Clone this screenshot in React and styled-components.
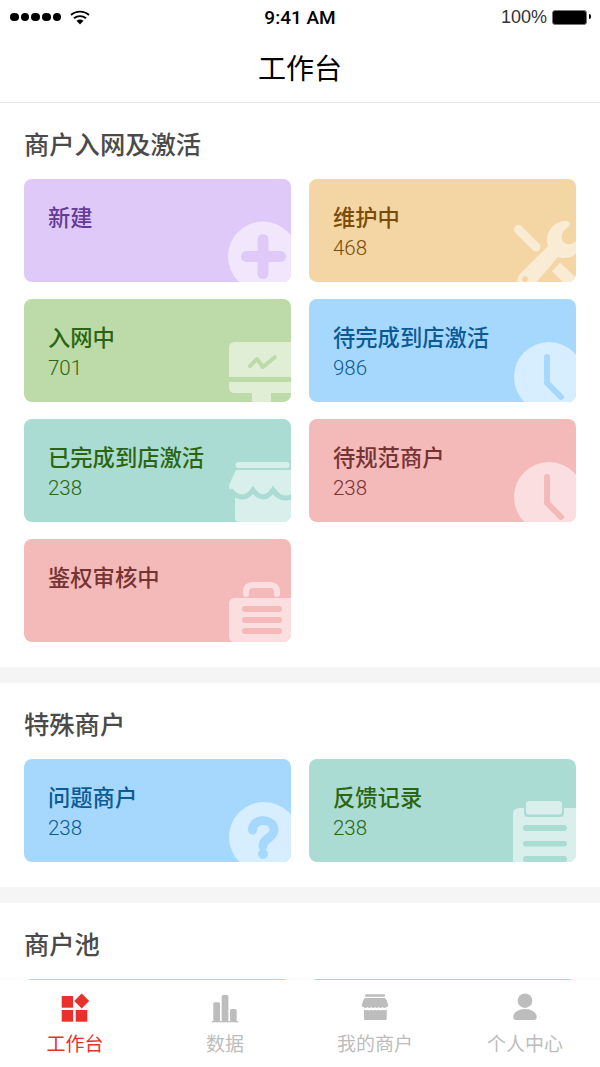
import styled, { createGlobalStyle } from "styled-components"

const GlobalStyle = createGlobalStyle`
    html, body{
        margin: 0;
        padding: 0;
        background: #ffffff;
    }
    *{
        box-sizing: border-box;
    }
`

const tones = {
    purple: { bg: "#dfc9f9", tint: "#f1e6fc", text: "#643a9a" },
    tan: { bg: "#f3d6a4", tint: "#faebd4", text: "#7a4c07" },
    green: { bg: "#bddba8", tint: "#dfeed5", text: "#2b6510" },
    blue: { bg: "#a6d8fe", tint: "#d6eeff", text: "#0b5a96" },
    teal: { bg: "#aadcd4", tint: "#d8efeb", text: "#2b6510" },
    pink: { bg: "#f4baba", tint: "#fbdfe0", text: "#763333" },
}

const PlusArt = () => (
    <>
        <circle cx="48" cy="44.5" r="35" fill="currentColor" />
        <rect className="cut" x="26" y="39" width="45" height="11" rx="5.5" />
        <rect className="cut" x="42.5" y="22" width="11" height="45" rx="5.5" />
    </>
)

const ToolsArt = () => (
    <>
        <path d="M18.5 17.5 L36 35" stroke="currentColor" strokeWidth="9" strokeLinecap="round" fill="none" />
        <path d="M56 55 L78 76" stroke="currentColor" strokeWidth="12" fill="none" />
        <path
            d="M66 9 C56 9 47 17 47 28 C47 31 47.500 32.500 48 34 L20 62 C17 65 17 68 18 72 L35 72 L58 45 C60 46 62 46 65 46 C71 46 76 43 78 39 L78 27 C75 31 71 33 67 32 C63 31 61 27 62 23 C63 19 66 16 69 14.500 C71 12 69 9 66 9 Z"
            fill="currentColor"
        />
        <circle className="hole" cx="25" cy="67" r="3" />
    </>
)

const ScreenArt = () => (
    <>
        <path d="M20 10 H76 V61 H20 Q14 61 14 55 V16 Q14 10 20 10 Z" fill="currentColor" />
        <rect className="hole" x="14" y="45" width="62" height="5" />
        <rect x="37" y="61" width="19" height="9" fill="currentColor" />
        <path className="cut line" d="M35 34 L42 27 L48 35 L60 25" strokeWidth="4" strokeLinecap="round" strokeLinejoin="round" />
    </>
)

const ClockArt = () => (
    <>
        <circle cx="49" cy="45" r="35" fill="currentColor" />
        <path className="cut line" d="M47 25 V51 L61 65" strokeWidth="6" strokeLinecap="round" strokeLinejoin="round" />
    </>
)

const StoreArt = () => (
    <>
        <rect x="20.500" y="10" width="54" height="6" rx="3" fill="currentColor" />
        <path d="M21 18 H76 V70 H24 Q20 70 20 66 V44 Q14 40 14 33 Z" fill="currentColor" />
        <path className="cut line" d="M15 38 Q28 52 38 38 Q48 52 58 38 Q66 50 78 44" strokeWidth="5" />
    </>
)

const CaseArt = () => (
    <>
        <path d="M31 22 V20 Q31 13 38 13 H55 Q62 13 62 20 V22" stroke="currentColor" strokeWidth="6" strokeLinecap="round" fill="none" />
        <path d="M20 26 H76 V70 H20 Q14 70 14 64 V32 Q14 26 20 26 Z" fill="currentColor" />
        <rect className="hole" x="27" y="34" width="40" height="6" rx="3" />
        <rect className="hole" x="27" y="45" width="40" height="6" rx="3" />
        <rect className="hole" x="27" y="56" width="40" height="6" rx="3" />
    </>
)

const QuestionArt = () => (
    <>
        <circle cx="49" cy="45" r="35" fill="currentColor" />
        <path className="cut line" d="M37.500 38 C37.500 25 59 26 59 38 C59 46 48 46 48 54" strokeWidth="9" strokeLinecap="round" />
        <circle className="hole" cx="48" cy="62" r="5" />
    </>
)

const ClipboardArt = () => (
    <>
        <path d="M19 16 H76 V70 H13 V22 Q13 16 19 16 Z" fill="currentColor" />
        <rect className="hole" x="24" y="8" width="40" height="17" rx="4" />
        <rect x="26" y="9" width="36" height="13.500" rx="3" fill="currentColor" />
        <rect className="hole" x="23" y="33" width="44" height="6" rx="3" />
        <rect className="hole" x="23" y="49" width="44" height="5.500" rx="2.700" />
        <rect className="hole" x="23" y="64" width="44" height="6" rx="3" />
    </>
)

const arts = {
    plus: PlusArt,
    tools: ToolsArt,
    screen: ScreenArt,
    clock: ClockArt,
    store: StoreArt,
    briefcase: CaseArt,
    question: QuestionArt,
    clipboard: ClipboardArt,
}

const Card = ({ tone, title, count, art }) => {
    const Art = arts[art]
    const colors = tones[tone]
    return (
        <CardBox $bg={colors.bg}>
            {title && <CardTitle $color={colors.text}>{title}</CardTitle>}
            {count && <CardCount $color={colors.text}>{count}</CardCount>}
            {Art && (
                <CardArt viewBox="0 0 76 70" $tint={colors.tint} $bg={colors.bg}>
                    <Art />
                </CardArt>
            )}
        </CardBox>
    )
}

const sections = [
    {
        title: "商户入网及激活",
        cards: [
            { tone: "purple", title: "新建", art: "plus" },
            { tone: "tan", title: "维护中", count: "468", art: "tools" },
            { tone: "green", title: "入网中", count: "701", art: "screen" },
            { tone: "blue", title: "待完成到店激活", count: "986", art: "clock" },
            { tone: "teal", title: "已完成到店激活", count: "238", art: "store" },
            { tone: "pink", title: "待规范商户", count: "238", art: "clock" },
            { tone: "pink", title: "鉴权审核中", art: "briefcase" },
        ],
    },
    {
        title: "特殊商户",
        cards: [
            { tone: "blue", title: "问题商户", count: "238", art: "question" },
            { tone: "teal", title: "反馈记录", count: "238", art: "clipboard" },
        ],
    },
    {
        title: "商户池",
        cards: [
            { tone: "blue" },
            { tone: "teal" },
        ],
    },
]

const WorkbenchIcon = () => (
    <TabSvg viewBox="0 0 32 32">
        <rect x="2.700" y="3" width="11.400" height="11.700" />
        <rect x="2.700" y="17" width="11.400" height="11.700" />
        <rect x="16.700" y="17" width="11.600" height="11.700" />
        <path d="M22.700 0.500 L30.200 8 L22.700 15.500 L15.200 8 Z" />
    </TabSvg>
)

const DataIcon = () => (
    <TabSvg viewBox="0 0 32 32">
        <rect x="4.300" y="9.300" width="6.700" height="19" rx="1.500" />
        <rect x="12.700" y="2" width="6.700" height="26.300" rx="1.500" />
        <rect x="21" y="16" width="6.700" height="12.300" rx="1.500" />
        <rect x="2.700" y="28" width="26.600" height="1.300" />
    </TabSvg>
)

const StoreIcon = () => (
    <TabSvg viewBox="0 0 32 32">
        <rect x="6" y="1.300" width="20" height="2.400" rx="1" />
        <path d="M7 5 H25 Q27 5 27.500 7 L29.300 12 Q29.300 14 27.500 14 Q25.500 16 23.500 14 Q21.500 16 19.700 14 Q17.800 16 16 14 Q14.200 16 12.300 14 Q10.500 16 8.500 14 Q6.500 16 4.500 14 Q2.700 14 2.700 12 L4.500 7 Q5 5 7 5 Z" />
        <path d="M5 16.500 Q7 18 8.500 16.800 Q10.500 18 12.300 16.800 Q14.200 18 16 16.800 Q17.800 18 19.700 16.800 Q21.500 18 23.500 16.800 Q25.500 18 27.700 16.500 V25.500 Q27.700 27 26 27 H6.500 Q5 27 5 25.500 Z" />
    </TabSvg>
)

const PersonIcon = () => (
    <TabSvg viewBox="0 0 32 32">
        <circle cx="16" cy="7.700" r="7.300" />
        <path d="M4.300 24 C4.300 19 10 16 16 16 S27.700 19 27.700 24 Q27.700 27 25 27 H7 Q4.300 27 4.300 24 Z" />
    </TabSvg>
)

const tabs = [
    { label: "工作台", Icon: WorkbenchIcon, active: true },
    { label: "数据", Icon: DataIcon },
    { label: "我的商户", Icon: StoreIcon },
    { label: "个人中心", Icon: PersonIcon },
]

const App = () => {
    return (
        <Page>
            <GlobalStyle />
            <StatusBar>
                <StatusLeft>
                    <Signal>
                        {[0, 1, 2, 3, 4].map((dot) => <i key={dot} />)}
                    </Signal>
                    <svg width="20" height="15" viewBox="0 0 20 15">
                        <path d="M1 5 C6 0.500 14 0.500 19 5" stroke="#000" strokeWidth="1.800" fill="none" />
                        <path d="M4 8.300 C7.500 5.300 12.500 5.300 16 8.300" stroke="#000" strokeWidth="1.800" fill="none" />
                        <path d="M6.500 10.700 C8.500 9.200 11.500 9.200 13.500 10.700 L10 14.500 Z" fill="#000" />
                    </svg>
                </StatusLeft>
                <Clock>9:41 AM</Clock>
                <StatusRight>
                    100%
                    <Battery />
                </StatusRight>
            </StatusBar>
            <NavBar>工作台</NavBar>
            {sections.map((section) => (
                <Section key={section.title}>
                    <SectionTitle>{section.title}</SectionTitle>
                    <CardGrid>
                        {section.cards.map((card, index) => <Card key={index} {...card} />)}
                    </CardGrid>
                </Section>
            ))}
            <TabBar>
                {tabs.map(({ label, Icon, active }) => (
                    <Tab key={label} $active={active}>
                        <Icon />
                        <span>{label}</span>
                    </Tab>
                ))}
            </TabBar>
        </Page>
    )
}

const Page = styled.div`
    position: relative;
    width: 600px;
    height: 1067px;
    overflow: hidden;
    background: #ffffff;
    font-family: "Liberation Sans", "Noto Sans CJK SC", sans-serif;
`

const StatusBar = styled.div`
    display: grid;
    grid-template-columns: 1fr auto 1fr;
    align-items: center;
    height: 34px;
    padding: 0 10px;
    color: #000000;
    font-size: 18px;
`

const StatusLeft = styled.div`
    display: flex;
    align-items: center;
    gap: 9px;
`

const Signal = styled.div`
    display: flex;
    gap: 2.200px;
    i{
        display: block;
        width: 8.500px;
        height: 8.500px;
        border-radius: 50%;
        background: #000000;
    }
`

const Clock = styled.div`
    font-family: Roboto, sans-serif;
    font-size: 19px;
    font-weight: 500;
`

const StatusRight = styled.div`
    display: flex;
    align-items: center;
    justify-content: flex-end;
    gap: 5px;
    color: #333333;
`

const Battery = styled.div`
    position: relative;
    width: 35px;
    height: 15px;
    margin-right: 3px;
    border: 1.500px solid #777777;
    border-radius: 3px;
    background: #000000;
    &::after{
        content: "";
        position: absolute;
        right: -5px;
        top: 3.500px;
        width: 2.500px;
        height: 5px;
        border-radius: 0 2px 2px 0;
        background: #000000;
    }
`

const NavBar = styled.div`
    display: flex;
    align-items: center;
    justify-content: center;
    height: 69px;
    padding-bottom: 2px;
    border-bottom: 1px solid #e8e8e8;
    color: #000000;
    font-family: "Noto Sans CJK SC", sans-serif;
    font-size: 28px;
    font-weight: 400;
`

const Section = styled.section`
    padding: 23px 24px 25px;
    border-bottom: 16px solid #f5f5f5;
`

const SectionTitle = styled.h2`
    margin: 0 0 18px;
    color: #4a4a4a;
    font-family: "Noto Sans CJK SC", sans-serif;
    font-size: 25.300px;
    font-weight: 500;
    line-height: 35px;
`

const CardGrid = styled.div`
    display: grid;
    grid-template-columns: 267px 267px;
    gap: 17px 18px;
`

const CardBox = styled.div`
    position: relative;
    height: 103px;
    padding: 22px 24px 0;
    overflow: hidden;
    border-radius: 8px;
    background: ${(p) => p.$bg};
`

const CardTitle = styled.div`
    color: ${(p) => p.$color};
    font-family: "Noto Sans CJK SC", sans-serif;
    font-size: 22.300px;
    font-weight: 500;
    line-height: 30px;
`

const CardCount = styled.div`
    margin-top: 5px;
    color: ${(p) => p.$color};
    font-family: Roboto, sans-serif;
    font-size: 20.500px;
    font-weight: 300;
    line-height: 24px;
`

const CardArt = styled.svg`
    position: absolute;
    right: 0;
    bottom: 0;
    width: 76px;
    height: 70px;
    color: ${(p) => p.$tint};
    .cut, .hole{
        fill: ${(p) => p.$bg};
    }
    .line{
        fill: none;
        stroke: ${(p) => p.$bg};
    }
`

const TabBar = styled.nav`
    position: absolute;
    left: 0;
    right: 0;
    bottom: 0;
    display: grid;
    grid-template-columns: repeat(4, 1fr);
    height: 87px;
    background: #ffffff;
    box-shadow: 0 -2px 4px rgba(0, 0, 0, 0.02);
`

const Tab = styled.div`
    display: flex;
    flex-direction: column;
    align-items: center;
    padding-top: 13px;
    color: ${(p) => (p.$active ? "#e8312a" : "#bdbdbd")};
    font-family: "Noto Sans CJK SC", sans-serif;
    font-size: 19px;
    line-height: 26px;
    span{
        margin-top: 5px;
    }
`

const TabSvg = styled.svg`
    display: block;
    width: 32px;
    height: 32px;
    fill: currentColor;
`

export default App
